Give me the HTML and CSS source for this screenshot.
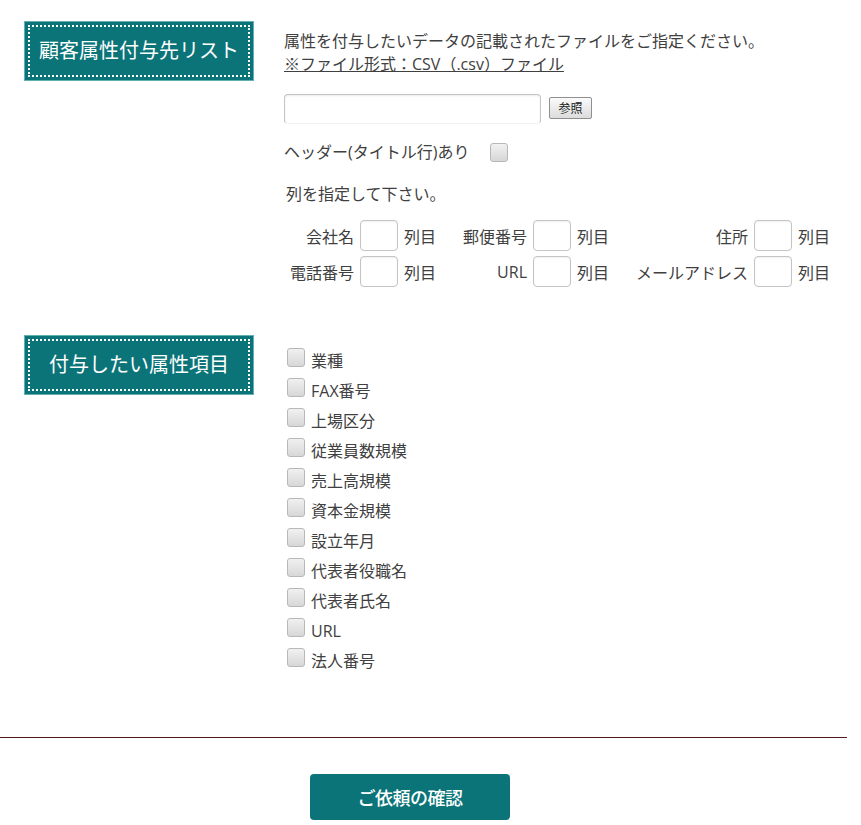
FILE: index.html
```html
<!DOCTYPE html>
<html lang="ja">
<head>
<meta charset="utf-8">
<title>顧客属性付与</title>
<link rel="stylesheet" href="styles.css">
</head>
<body>
<div class="page">
  <section class="section section-list">
    <h2 class="heading">顧客属性付与先リスト</h2>
    <div class="content">
      <p class="lead">属性を付与したいデータの記載されたファイルをご指定ください。<br><span class="note">※ファイル形式：CSV（.csv）ファイル</span></p>
      <div class="file-row">
        <input type="text" class="file-input">
        <button type="button" class="browse">参照</button>
      </div>
      <label class="header-row">ヘッダー(タイトル行)あり<input type="checkbox" class="check header-check"></label>
      <p class="cols-title">列を指定して下さい。</p>
      <div class="col-grid">
        <span class="lbl">会社名</span><input type="text" class="col-input"><span class="sfx">列目</span>
        <span class="lbl">郵便番号</span><input type="text" class="col-input"><span class="sfx">列目</span>
        <span class="lbl">住所</span><input type="text" class="col-input"><span class="sfx">列目</span>
        <span class="lbl">電話番号</span><input type="text" class="col-input"><span class="sfx">列目</span>
        <span class="lbl">URL</span><input type="text" class="col-input"><span class="sfx">列目</span>
        <span class="lbl">メールアドレス</span><input type="text" class="col-input"><span class="sfx">列目</span>
      </div>
    </div>
  </section>

  <section class="section section-attr">
    <h2 class="heading">付与したい属性項目</h2>
    <ul class="attr-list">
      <li><label><input type="checkbox" class="check">業種</label></li>
      <li><label><input type="checkbox" class="check">FAX番号</label></li>
      <li><label><input type="checkbox" class="check">上場区分</label></li>
      <li><label><input type="checkbox" class="check">従業員数規模</label></li>
      <li><label><input type="checkbox" class="check">売上高規模</label></li>
      <li><label><input type="checkbox" class="check">資本金規模</label></li>
      <li><label><input type="checkbox" class="check">設立年月</label></li>
      <li><label><input type="checkbox" class="check">代表者役職名</label></li>
      <li><label><input type="checkbox" class="check">代表者氏名</label></li>
      <li><label><input type="checkbox" class="check">URL</label></li>
      <li><label><input type="checkbox" class="check">法人番号</label></li>
    </ul>
  </section>

  <hr class="divider">

  <div class="actions">
    <button type="button" class="confirm">ご依頼の確認</button>
  </div>
</div>
</body>
</html>
```
FILE: styles.css
```css
html, body {
  margin: 0;
  padding: 0;
  background: #ffffff;
}

body {
  font-family: "Open Sans", "Noto Sans CJK JP", sans-serif;
  font-size: 16px;
  color: #404040;
}

.page {
  width: 847px;
}

.section {
  display: flex;
  align-items: flex-start;
  gap: 30px;
  padding-left: 24px;
}

.section-list {
  padding-top: 21px;
}

.section-attr {
  margin-top: 48px;
}

.heading {
  box-sizing: border-box;
  flex: 0 0 230px;
  width: 230px;
  height: 60px;
  margin: 0;
  padding-bottom: 3px;
  background: #0b7478;
  border: 1px solid #62b0b2;
  outline: 2px dotted #ffffff;
  outline-offset: -6px;
  color: #ffffff;
  font-family: "Noto Sans CJK JP", sans-serif;
  font-size: 20px;
  font-weight: 400;
  display: flex;
  align-items: center;
  justify-content: center;
}

.content {
  padding-top: 9px;
  display: flex;
  flex-direction: column;
  align-items: flex-start;
}

.lead {
  margin: 0;
  line-height: 23px;
}

.note {
  text-decoration: underline;
}

.file-row {
  margin-top: 18px;
  display: flex;
  align-items: flex-start;
  gap: 8px;
}

.file-input {
  box-sizing: border-box;
  width: 257px;
  height: 30px;
  margin: 0;
  border: 1px solid #c4c4c4;
  border-bottom-color: #f2f2f2;
  border-radius: 4px;
  box-shadow: inset 0 1px 2px rgba(0, 0, 0, 0.08);
  background: #ffffff;
}

.browse {
  box-sizing: border-box;
  margin-top: 3px;
  width: 43px;
  height: 22px;
  padding: 0;
  border: 1px solid #8f8f8f;
  border-radius: 2px;
  background: linear-gradient(#fbfbfb, #dcdcdc);
  font-family: "Noto Sans CJK JP", sans-serif;
  font-size: 12px;
  color: #222;
  line-height: 18px;
}

.header-row {
  margin-top: 19px;
  display: flex;
  align-items: center;
  gap: 21px;
  height: 18px;
  line-height: 18px;
}

.check {
  appearance: none;
  -webkit-appearance: none;
  box-sizing: border-box;
  width: 18px;
  height: 19px;
  margin: 0;
  border: 1px solid #b8b8b8;
  border-radius: 3px;
  background: linear-gradient(#f1f1f1, #d7d7d7);
  flex: 0 0 auto;
}

.cols-title {
  margin: 22px 0 0 2px;
  line-height: 23px;
}

.col-grid {
  margin-top: 14px;
  display: grid;
  grid-template-columns: 76px 38px 42px 93px 38px 42px 141px 38px auto;
  grid-auto-rows: 31px;
  row-gap: 5px;
  align-items: center;
}

.lbl {
  text-align: right;
  padding-right: 6px;
  white-space: nowrap;
}

.sfx {
  padding-left: 6px;
  white-space: nowrap;
}

.col-input {
  box-sizing: border-box;
  width: 38px;
  height: 31px;
  margin: 0;
  border: 1px solid #c4c4c4;
  border-radius: 4px;
  box-shadow: inset 0 1px 2px rgba(0, 0, 0, 0.06);
  background: #ffffff;
}

.attr-list {
  list-style: none;
  margin: 0;
  padding: 11px 0 0 3px;
}

.attr-list li {
  height: 30px;
}

.attr-list label {
  display: flex;
  align-items: flex-start;
  gap: 6px;
  line-height: 30px;
}

.attr-list .check {
  margin-top: 2px;
}

.divider {
  margin: 61px 0 0 0;
  border: 0;
  height: 1px;
  background: #501c1c;
}

.actions {
  padding: 36px 0 0 310px;
}

.confirm {
  width: 200px;
  height: 46px;
  border: 0;
  border-radius: 4px;
  background: #0b7478;
  color: #ffffff;
  font-family: "Noto Sans CJK JP", sans-serif;
  font-size: 18px;
  font-weight: 500;
  letter-spacing: -0.5px;
}
```
